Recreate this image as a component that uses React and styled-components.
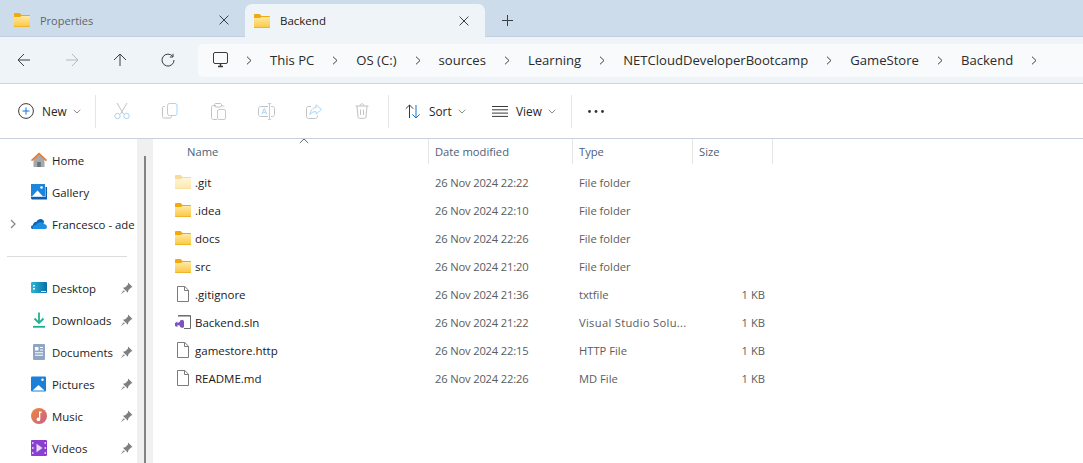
import React from 'react';
import styled, { createGlobalStyle } from 'styled-components';

const GlobalStyle = createGlobalStyle`
  html, body {
    margin: 0;
    height: 100%;
    background: #fff;
  }
  #root {
    height: 100%;
  }
  * {
    box-sizing: border-box;
  }
`;

const Window = styled.div`
  width: 1083px;
  height: 463px;
  display: flex;
  flex-direction: column;
  overflow: hidden;
  font-family: 'Open Sans', 'Noto Sans', sans-serif;
  color: #1a1a1a;
`;

/* tabs */
const TabStrip = styled.div`
  height: 37px;
  flex: none;
  display: flex;
  align-items: flex-end;
  background: #cddceb;
  border-bottom: 1px solid #bfcfdf;
`;

const Tab = styled.div`
  width: ${p => (p.$active ? '240px' : '245px')};
  height: ${p => (p.$active ? '33px' : '32px')};
  margin-bottom: ${p => (p.$active ? '-1px' : '0')};
  display: flex;
  align-items: center;
  padding: 0 8px 0 ${p => (p.$active ? '9px' : '14px')};
  background: ${p => (p.$active ? '#eff4f9' : 'transparent')};
  border-radius: 7px 7px 0 0;
  font-size: ${p => (p.$active ? '11.5px' : '11px')};
  font-weight: ${p => (p.$active ? 500 : 400)};
  color: ${p => (p.$active ? '#1a1a1a' : '#5f666d')};
  svg.folder { margin-right: 10px; }
`;

const TabTitle = styled.span`
  flex: 1;
`;

const TabClose = styled.span`
  width: 26px;
  display: flex;
  justify-content: center;
`;

const NewTab = styled.span`
  margin-left: 17px;
  height: 32px;
  display: flex;
  align-items: center;
`;

/* address row */
const NavRow = styled.div`
  height: 47px;
  flex: none;
  display: flex;
  align-items: center;
  background: #eff4f9;
  border-bottom: 1px solid #cbd5df;
`;

const NavButton = styled.span`
  width: 48px;
  display: flex;
  justify-content: center;
`;

const Breadcrumb = styled.div`
  flex: 1;
  height: 33px;
  margin-left: 6px;
  display: flex;
  align-items: center;
  gap: 18px;
  padding-left: 15px;
  background: #f8fafc;
  border-radius: 5px 0 0 5px;
  font-size: 13.1px;
  color: #2b2b2b;
`;

const Crumb = styled.span`
  white-space: nowrap;
`;

/* command bar */
const CommandBar = styled.div`
  height: 55px;
  flex: none;
  display: flex;
  align-items: center;
  padding-left: 18px;
  background: #fff;
  border-bottom: 1px solid #c9d2da;
  font-size: 11.8px;
`;

const Command = styled.span`
  display: flex;
  align-items: center;
  height: 32px;
  width: ${p => p.$width}px;
  flex: none;
`;

const IconCommand = styled.span`
  width: 48px;
  flex: none;
  display: flex;
  justify-content: center;
`;

const CommandLabel = styled.span`
  margin: 0 6px 0 8px;
  color: #262626;
`;

const Separator = styled.span`
  width: 1px;
  height: 33px;
  flex: none;
  background: #e3e6e9;
  margin: ${p => p.$margin};
`;

/* body */
const Body = styled.div`
  flex: 1;
  min-height: 0;
  display: flex;
`;

const Sidebar = styled.nav`
  width: 137px;
  flex: none;
  padding-top: 5px;
  overflow: hidden;
  font-size: 11.4px;
`;

const SideItem = styled.div`
  height: 32px;
  display: flex;
  align-items: center;
  padding-left: 31px;
  position: relative;
  white-space: nowrap;
  color: #1c1c1c;
  svg.main { flex: none; margin-right: 5px; }
`;

const Expander = styled.span`
  position: absolute;
  left: 10px;
  top: 11px;
  display: flex;
`;

const Pin = styled.span`
  position: absolute;
  left: 120px;
  top: 10px;
  display: flex;
`;

const SideDivider = styled.hr`
  width: 120px;
  height: 1px;
  border: 0;
  margin: 16px 0 15px 7px;
  background: #dcdcdc;
`;

const ScrollTrack = styled.div`
  width: 16px;
  flex: none;
  background: #f0f0f0;
  padding: 17px 0 0 7px;
`;

const ScrollThumb = styled.div`
  width: 2px;
  height: 100%;
  background: #838383;
`;

const FileList = styled.main`
  flex: 1;
  font-size: 11.2px;
`;

const gridColumns = '276px 144px 120px 80px';

const HeaderRow = styled.div`
  height: 25px;
  display: grid;
  grid-template-columns: ${gridColumns};
  position: relative;
  color: #4c607a;
  margin-bottom: 4px;
`;

const HeaderCell = styled.div`
  display: flex;
  align-items: center;
  padding-left: 6px;
  border-right: 1px solid #e5e5e5;
  &:first-child { padding-left: 34px; }
`;

const SortCaret = styled.span`
  position: absolute;
  left: 146px;
  top: -1px;
  display: flex;
`;

const Row = styled.div`
  height: 28px;
  display: grid;
  grid-template-columns: ${gridColumns};
  align-items: center;
  color: #5c5c5c;
`;

const NameCell = styled.div`
  display: flex;
  align-items: center;
  padding-left: 22px;
  font-size: 11.5px;
  color: #1a1a1a;
  svg { flex: none; margin-right: 4px; }
`;

const DateCell = styled.div`
  padding-left: 6px;
  white-space: nowrap;
  letter-spacing: -0.17px;
`;

const TypeCell = styled.div`
  padding-left: 6px;
  white-space: nowrap;
  letter-spacing: ${p => (p.$long ? '0.3px' : '0')};
`;

const SizeCell = styled.div`
  padding-right: 8px;
  text-align: right;
`;

const PageSvg = styled.svg`
  && {
    margin-left: 1px;
    margin-right: 5px;
  }
`;

/* icons */
const Folder = ({ ghost }) => (
  <svg className="folder" width="16" height="14" viewBox="0 0 16 14" opacity={ghost ? 0.42 : 1}>
    <defs>
      <linearGradient id="fbody" x1="0" y1="0" x2="0" y2="1">
        <stop offset="0" stopColor="#ffe9a6" />
        <stop offset="1" stopColor="#fbc73e" />
      </linearGradient>
    </defs>
    <path d="M0 1.2C0 .5.5 0 1.2 0h3.9c.4 0 .7.1 1 .4L7.6 2H15c.6 0 1 .4 1 1v2H0z" fill="#f2a90c" />
    <path d="M0 4h6l1.500-1H16v10c0 .6-.4 1-1 1H1c-.6 0-1-.4-1-1z" fill="url(#fbody)" />
    <path d="M0 13h16c0 .6-.4 1-1 1H1c-.6 0-1-.4-1-1z" fill="#f0b429" />
  </svg>
);

const CloseIcon = () => (
  <svg width="10" height="10" viewBox="0 0 10 10" stroke="#3a3f44" fill="none"><path d="M.6.6l8.800 8.800M9.400.6L.6 9.400" /></svg>
);

const Chevron = () => (
  <svg width="6" height="9" viewBox="0 0 6 9" fill="none" stroke="#3f3f3f"><path d="M1 .7l4 3.800-4 3.800" /></svg>
);

const Caret = () => (
  <svg width="8" height="5" viewBox="0 0 8 5" fill="none" stroke="#8a8a8a"><path d="M.7.8L4 4 7.300.8" /></svg>
);

const Nav = ({ d, color = '#3c3c3c' }) => (
  <svg width="14" height="14" viewBox="0 0 14 14" fill="none" stroke={color} strokeWidth="1"><path d={d} /></svg>
);

const PcIcon = () => (
  <svg width="15" height="16" viewBox="0 0 15 16" fill="none">
    <rect x=".5" y=".5" width="14" height="11" rx="1.5" stroke="#3a3a3a" />
    <path d="M5 14.500h5M7.500 12v2" stroke="#3a3a3a" strokeWidth="1.5" />
  </svg>
);

const blue = '#a9d3f3';
const grey = '#c2c2c2';

const CutIcon = () => (
  <svg width="16" height="18" viewBox="0 0 16 18" fill="none">
    <path d="M3 1l6.500 11M13 1L6.500 12" stroke={grey} />
    <circle cx="3.5" cy="14" r="2.7" stroke={blue} />
    <circle cx="12.5" cy="14" r="2.7" stroke={blue} />
  </svg>
);

const CopyIcon = () => (
  <svg width="16" height="16" viewBox="0 0 16 16" fill="none">
    <path d="M3 3.500H2C1 3.500.5 4 .5 5v8.500c0 1 .5 1.500 1.500 1.500h6c1 0 1.500-.5 1.500-1.500V13" stroke={grey} />
    <rect x="5.5" y=".5" width="9.500" height="12" rx="2" stroke={blue} />
  </svg>
);

const PasteIcon = () => (
  <svg width="15" height="17" viewBox="0 0 15 17" fill="none">
    <path d="M5 2.500H2.500c-1 0-2 .7-2 2v10c0 1.300 1 2 2 2H6M10 2.500h1c1 0 1.800.6 2 1.500" stroke={grey} />
    <rect x="3.5" y=".5" width="7" height="3.500" rx="1.2" stroke={grey} />
    <rect x="6.5" y="6.500" width="8" height="10" rx="1.5" stroke={blue} />
  </svg>
);

const RenameIcon = () => (
  <svg width="17" height="17" viewBox="0 0 17 17" fill="none">
    <path d="M10 3.500H2.500c-1 0-2 .8-2 2v6c0 1.200 1 2 2 2H10M13 3.500h1.500c1 0 2 .8 2 2v6c0 1.200-1 2-2 2H13" stroke={grey} />
    <path d="M11.500.8v15.400M9.800.6h3.400M9.800 16.400h3.400" stroke={blue} />
    <path d="M3.700 11.300L6.300 5.500l2.600 5.800M4.700 9.300h3.200" stroke={blue} />
  </svg>
);

const ShareIcon = () => (
  <svg width="16" height="15" viewBox="0 0 16 15" fill="none">
    <path d="M5 2.500H2.500c-1 0-2 .8-2 2v8c0 1.200 1 2 2 2h7c1 0 2-.8 2-2v-1" stroke={grey} />
    <path d="M10 .8L15.500 5.500 10 10V7.500C7.500 7.500 5.500 8.500 4 10.500 4.300 7 6.500 3.800 10 3.500z" stroke={blue} />
  </svg>
);

const TrashIcon = () => (
  <svg width="14" height="16" viewBox="0 0 14 16" fill="none" stroke={grey}>
    <path d="M.5 3h13M5 3c0-1.300.8-2.200 2-2.200S9 1.700 9 3M2 3l1 11c.1.800.6 1.300 1.400 1.300h5.200c.8 0 1.300-.5 1.400-1.300l1-11M5.500 6.500v5.500M8.500 6.500v5.500" />
  </svg>
);

const NewIcon = () => (
  <svg width="16" height="16" viewBox="0 0 16 16" fill="none">
    <circle cx="8" cy="8" r="7.4" stroke="#3a3a3a" />
    <path d="M8 4.500v7M4.500 8h7" stroke="#0a78d4" />
  </svg>
);

const SortIcon = () => (
  <svg width="16" height="15" viewBox="0 0 16 15" fill="none">
    <path d="M4.500 14V1M.8 4.700L4.500 1l3.700 3.700" stroke="#3a3a3a" />
    <path d="M11 1v13M7.300 10.300L11 14l3.700-3.700" stroke="#0a78d4" />
  </svg>
);

const ViewIcon = () => (
  <svg width="16" height="11" viewBox="0 0 16 11" stroke="#3a3a3a"><path d="M0 .5h16M0 3.800h16M0 7.100h16M0 10.400h16" /></svg>
);

const Dots = () => (
  <svg width="16" height="3" viewBox="0 0 16 3" fill="#333"><circle cx="1.5" cy="1.5" r="1.4" /><circle cx="8" cy="1.5" r="1.4" /><circle cx="14.5" cy="1.5" r="1.4" /></svg>
);

const PinIcon = () => (
  <svg width="13" height="13" viewBox="0 0 12 12" fill="#7f7f7f"><path d="M7.500.5l4 4-1.200.6-2.600 2.500-.4 2.300-4.700-4.700 2.300-.4 2.500-2.600zM3.400 7.500L.6 11.400l3.900-2.800z" /></svg>
);

const HomeIcon = () => (
  <svg className="main" width="16" height="16" viewBox="0 0 16 16">
    <path d="M2.500 7L8 2.500 13.500 7v8h-11z" fill="#a3a9ad" />
    <path d="M6.200 15v-5h3.600v5z" fill="#6d7377" />
    <path d="M0 8l8-7.500L16 8l-1 1.200-7-6.400L1 9.200z" fill="#e8782b" />
  </svg>
);

const GalleryIcon = () => (
  <svg className="main" width="16" height="16" viewBox="0 0 16 16">
    <path d="M0 0h14v12.500H0z" fill="#1c86dd" />
    <path d="M1 12.500L6.500 6.500l5.500 6z" fill="#fff" />
    <circle cx="10.5" cy="3.500" r="1.3" fill="#fff" />
    <path d="M0 13h14.500V3H16v12.500H1.500c-.8 0-1.500-.7-1.500-1.500z" fill="#0f5fae" />
  </svg>
);

const CloudIcon = () => (
  <svg className="main" width="16" height="16" viewBox="0 0 16 16">
    <path d="M1.800 13C.7 13 0 12.200 0 11.200c0-1 .8-1.800 1.800-1.900.3-2 1.800-3.500 3.700-3.600C6.400 4 8 3 9.500 3c2 0 3.400 1.300 3.800 3.300" fill="#0a64b8" />
    <path d="M3 13c-1 0-1.500-.8-1.500-1.500C1.500 10 3 9 5 9c1-2 3-3 5-2.800 1.500.2 3 .8 3.500 2C15 8.500 16 9.500 16 11c0 1.200-1 2-2 2z" fill="#1c8fe0" />
  </svg>
);

const DesktopIcon = () => (
  <svg className="main" width="16" height="14" viewBox="0 0 16 14">
    <defs>
      <linearGradient id="dsk" x1="0" y1="0" x2="1" y2="0">
        <stop offset="0" stopColor="#2bb8d8" />
        <stop offset="1" stopColor="#0a6ea8" />
      </linearGradient>
    </defs>
    <rect y="1" width="16" height="11" rx="1" fill="url(#dsk)" />
    <path d="M2 4h2v1.500H2zM2 7h2v1.500H2z" fill="#fff" />
    <path d="M10 10.500h5" stroke="#d7eef7" />
  </svg>
);

const DownloadIcon = () => (
  <svg className="main" width="16" height="16" viewBox="0 0 16 16" fill="none" stroke="#21b38f" strokeWidth="1.8">
    <path d="M8 .5v10M3.500 6.500L8 11l4.500-4.500" />
    <path d="M2 14.800h12" stroke="#1eb28c" />
  </svg>
);

const DocumentsIcon = () => (
  <svg className="main" width="16" height="16" viewBox="0 0 16 16">
    <rect x="2" y="0" width="12" height="16" rx="1" fill="#8ea6c6" />
    <path d="M4 3h3.500v3.500H4z" fill="#fff" />
    <path d="M9 3h3v1H9zM9 5.500h3v1H9zM4 8.300h8v1H4zM4 10.800h8v1H4z" fill="#fff" />
  </svg>
);

const PicturesIcon = () => (
  <svg className="main" width="16" height="16" viewBox="0 0 16 16">
    <rect width="15" height="15" y=".5" rx="1" fill="#1a80d8" />
    <path d="M1.500 14.500L7.500 9l6 5.500z" fill="#fff" />
    <circle cx="11.5" cy="3.800" r="1.2" fill="#fff" />
  </svg>
);

const MusicIcon = () => (
  <svg className="main" width="16" height="16" viewBox="0 0 16 16">
    <defs>
      <linearGradient id="mus" x1="0" y1="0" x2="1" y2="1">
        <stop offset="0" stopColor="#ee8a3e" />
        <stop offset="1" stopColor="#c75f85" />
      </linearGradient>
    </defs>
    <circle cx="8" cy="8" r="8" fill="url(#mus)" />
    <path d="M8 3.500h2.500V5H9.300v6.300A1.900 1.900 0 1 1 8 9.600z" fill="#fff" />
  </svg>
);

const VideosIcon = () => (
  <svg className="main" width="16" height="16" viewBox="0 0 16 16">
    <rect width="16" height="16" rx="1" fill="#8a3fd0" />
    <path d="M1 2h1.500v2H1zM1 7h1.500v2H1zM1 12h1.500v2H1zM13.500 2H15v2h-1.500zM13.500 7H15v2h-1.500zM13.500 12H15v2h-1.500z" fill="#d7bff0" />
    <path d="M5.500 3.800l6 4.200-6 4.200z" fill="#e6dcf5" />
  </svg>
);

const FileIcon = () => (
  <PageSvg width="14" height="16" viewBox="0 0 14 16" fill="#fff" stroke="#7b7b7b">
    <path d="M1.500.5h7.300l3.700 3.700v11.300h-11z" />
    <path d="M8.500.5v4h4" fill="none" />
  </PageSvg>
);

const SlnIcon = () => (
  <svg width="16" height="16" viewBox="0 0 16 16">
    <path d="M3 1.500h12.500v13H9" fill="#fff" stroke="#6b6b6b" />
    <path d="M3 1h12.500v2H3z" fill="#777" opacity=".6" />
    <path d="M0 9l2.500-1.500v1.800L5 7.500V6.500L7.500 5.800 9 7v6l-1.500 1-2.500-1v-1.300L2.500 11v2L0 12z" fill="#7c55bf" />
  </svg>
);

const crumbs = ['This PC', 'OS (C:)', 'sources', 'Learning', 'NETCloudDeveloperBootcamp', 'GameStore', 'Backend'];

const quick = [
  ['Desktop', DesktopIcon],
  ['Downloads', DownloadIcon],
  ['Documents', DocumentsIcon],
  ['Pictures', PicturesIcon],
  ['Music', MusicIcon],
  ['Videos', VideosIcon],
];

const files = [
  { name: '.git', date: '26 Nov 2024 22:22', type: 'File folder', icon: <Folder ghost /> },
  { name: '.idea', date: '26 Nov 2024 22:10', type: 'File folder', icon: <Folder /> },
  { name: 'docs', date: '26 Nov 2024 22:26', type: 'File folder', icon: <Folder /> },
  { name: 'src', date: '26 Nov 2024 21:20', type: 'File folder', icon: <Folder /> },
  { name: '.gitignore', date: '26 Nov 2024 21:36', type: 'txtfile', size: '1 KB', icon: <FileIcon /> },
  { name: 'Backend.sln', date: '26 Nov 2024 21:22', type: 'Visual Studio Solu...', size: '1 KB', icon: <SlnIcon /> },
  { name: 'gamestore.http', date: '26 Nov 2024 22:15', type: 'HTTP File', size: '1 KB', icon: <FileIcon /> },
  { name: 'README.md', date: '26 Nov 2024 22:26', type: 'MD File', size: '1 KB', icon: <FileIcon /> },
];

const App = () => (
  <Window>
    <GlobalStyle />
    <TabStrip>
      <Tab>
        <Folder />
        <TabTitle>Properties</TabTitle>
        <TabClose><CloseIcon /></TabClose>
      </Tab>
      <Tab $active>
        <Folder />
        <TabTitle>Backend</TabTitle>
        <TabClose><CloseIcon /></TabClose>
      </Tab>
      <NewTab>
        <svg width="11" height="11" viewBox="0 0 11 11" stroke="#3a3f44"><path d="M5.500 0v11M0 5.500h11" /></svg>
      </NewTab>
    </TabStrip>

    <NavRow>
      <NavButton><Nav d="M13 7H1M7 1L1 7l6 6" /></NavButton>
      <NavButton><Nav d="M1 7h12M7 1l6 6-6 6" color="#b5b9bd" /></NavButton>
      <NavButton><Nav d="M7 13V1M1 7l6-6 6 6" /></NavButton>
      <NavButton><Nav d="M11.800 3.500A6 6 0 1 0 13 7M12 .8v3.200H8.800" /></NavButton>
      <Breadcrumb>
        <PcIcon />
        {crumbs.map(c => (
          <React.Fragment key={c}>
            <Chevron />
            <Crumb>{c}</Crumb>
          </React.Fragment>
        ))}
        <Chevron />
      </Breadcrumb>
    </NavRow>

    <CommandBar>
      <Command $width={77}>
        <NewIcon />
        <CommandLabel>New</CommandLabel>
        <Caret />
      </Command>
      <Separator $margin="0 2px 0 0" />
      <IconCommand><CutIcon /></IconCommand>
      <IconCommand><CopyIcon /></IconCommand>
      <IconCommand><PasteIcon /></IconCommand>
      <IconCommand><RenameIcon /></IconCommand>
      <IconCommand><ShareIcon /></IconCommand>
      <IconCommand><TrashIcon /></IconCommand>
      <Separator $margin="0 16px 0 2px" />
      <Command $width={87}>
        <SortIcon />
        <CommandLabel>Sort</CommandLabel>
        <Caret />
      </Command>
      <Command $width={79}>
        <ViewIcon />
        <CommandLabel>View</CommandLabel>
        <Caret />
      </Command>
      <Separator $margin="0 16px 0 0" />
      <Dots />
    </CommandBar>

    <Body>
      <Sidebar>
        <SideItem><HomeIcon />Home</SideItem>
        <SideItem><GalleryIcon />Gallery</SideItem>
        <SideItem>
          <Expander>
            <svg width="6" height="10" viewBox="0 0 6 10" fill="none" stroke="#8a8a8a" strokeWidth="1.3"><path d="M1 1l4 4-4 4" /></svg>
          </Expander>
          <CloudIcon />Francesco - ade
        </SideItem>
        <SideDivider />
        {quick.map(([label, Icon]) => (
          <SideItem key={label}>
            <Icon />{label}
            <Pin><PinIcon /></Pin>
          </SideItem>
        ))}
      </Sidebar>
      <ScrollTrack><ScrollThumb /></ScrollTrack>
      <FileList>
        <HeaderRow>
          <HeaderCell>Name</HeaderCell>
          <HeaderCell>Date modified</HeaderCell>
          <HeaderCell>Type</HeaderCell>
          <HeaderCell>Size</HeaderCell>
          <SortCaret>
            <svg width="10" height="6" viewBox="0 0 10 6" fill="none" stroke="#6b6b6b"><path d="M.8 5L5 1l4.200 4" /></svg>
          </SortCaret>
        </HeaderRow>
        {files.map(f => (
          <Row key={f.name}>
            <NameCell>{f.icon}<span>{f.name}</span></NameCell>
            <DateCell>{f.date}</DateCell>
            <TypeCell $long={f.type.length > 12}>{f.type}</TypeCell>
            <SizeCell>{f.size}</SizeCell>
          </Row>
        ))}
      </FileList>
    </Body>
  </Window>
);

export default App;
